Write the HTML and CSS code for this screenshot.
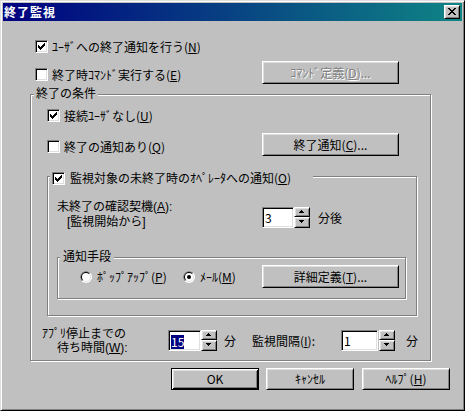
FILE: index.html
```html
<!DOCTYPE html>
<html lang="ja">
<head>
<meta charset="utf-8">
<title>終了監視</title>
<link rel="stylesheet" href="styles.css">
</head>
<body>
<div class="window">
  <div class="titlebar">
    <span class="title">終了監視</span>
    <span class="close raised"><svg width="8" height="7" viewBox="0 0 8 7"><path d="M0 0h2v1h-2zM6 0h2v1h-2zM1 1h2v1h-2zM5 1h2v1h-2zM2 2h4v1h-4zM3 3h2v1h-2zM2 4h4v1h-4zM1 5h2v1h-2zM5 5h2v1h-2zM0 6h2v1h-2zM6 6h2v1h-2z"/></svg></span>
  </div>
  <div class="client">
    <div class="row r1">
      <span class="check"><svg width="7" height="7" viewBox="0 0 7 7"><path d="M6 0h1v1h-1zM5 1h2v1h-2zM0 2h1v1h-1zM4 2h3v1h-3zM0 3h2v1h-2zM3 3h3v1h-3zM0 4h5v1h-5zM1 5h3v1h-3zM2 6h1v1h-1z"/></svg></span><span class="lbl">ﾕｰｻﾞへの終了通知を行う(<u>N</u>)</span>
    </div>
    <div class="row r2">
      <div class="left"><span class="check"></span><span class="lbl">終了時ｺﾏﾝﾄﾞ実行する(<u>E</u>)</span></div>
      <button class="btn raised disabled">ｺﾏﾝﾄﾞ定義(<u>D</u>)...</button>
    </div>
    <div class="group g1">
      <div class="legend">終了の条件</div>
      <div class="row r3">
        <span class="check"><svg width="7" height="7" viewBox="0 0 7 7"><path d="M6 0h1v1h-1zM5 1h2v1h-2zM0 2h1v1h-1zM4 2h3v1h-3zM0 3h2v1h-2zM3 3h3v1h-3zM0 4h5v1h-5zM1 5h3v1h-3zM2 6h1v1h-1z"/></svg></span><span class="lbl">接続ﾕｰｻﾞなし(<u>U</u>)</span>
      </div>
      <div class="row r4">
        <div class="left"><span class="check"></span><span class="lbl">終了の通知あり(<u>Q</u>)</span></div>
        <button class="btn raised">終了通知(<u>C</u>)...</button>
      </div>
      <div class="group g2">
        <div class="legend"><span class="check"><svg width="7" height="7" viewBox="0 0 7 7"><path d="M6 0h1v1h-1zM5 1h2v1h-2zM0 2h1v1h-1zM4 2h3v1h-3zM0 3h2v1h-2zM3 3h3v1h-3zM0 4h5v1h-5zM1 5h3v1h-3zM2 6h1v1h-1z"/></svg></span><span class="lbl">監視対象の未終了時のｵﾍﾟﾚｰﾀへの通知(<u>O</u>)</span></div>
        <div class="row r5">
          <div class="desc">
            <div>未終了の確認契機(<u>A</u>):</div>
            <div class="l2">[監視開始から]</div>
          </div>
          <div class="spinrow">
            <span class="edit e32">3</span>
            <span class="updown">
              <span class="ud up raised"><svg width="5" height="3" viewBox="0 0 5 3"><path d="M2 0h1v1h-1zM1 1h3v1h-3zM0 2h5v1h-5z"/></svg></span>
              <span class="ud dn raised"><svg width="5" height="3" viewBox="0 0 5 3"><path d="M0 0h5v1h-5zM1 1h3v1h-3zM2 2h1v1h-1z"/></svg></span>
            </span>
            <span class="unit">分後</span>
          </div>
        </div>
        <div class="group g3">
          <div class="legend">通知手段</div>
          <div class="row r6">
            <div class="ritem ri1">
              <svg class="radio" width="12" height="12" viewBox="0 0 12 12"><circle cx="6" cy="6" r="6" fill="#fff"/><path d="M1.757 10.243A6 6 0 0 1 10.243 1.757Z" fill="#808080"/><circle cx="6" cy="6" r="5" fill="#dfdfdf"/><path d="M2.464 9.536A5 5 0 0 1 9.536 2.464Z" fill="#000"/><circle cx="6" cy="6" r="4" fill="#fff"/></svg>
              <span class="rlbl">ﾎﾟｯﾌﾟｱｯﾌﾟ(<u>P</u>)</span>
            </div>
            <div class="ritem ri2">
              <svg class="radio" width="12" height="12" viewBox="0 0 12 12"><circle cx="6" cy="6" r="6" fill="#fff"/><path d="M1.757 10.243A6 6 0 0 1 10.243 1.757Z" fill="#808080"/><circle cx="6" cy="6" r="5" fill="#dfdfdf"/><path d="M2.464 9.536A5 5 0 0 1 9.536 2.464Z" fill="#000"/><circle cx="6" cy="6" r="4" fill="#fff"/><circle cx="6" cy="6" r="2" fill="#000"/></svg>
              <span class="rlbl">ﾒｰﾙ(<u>M</u>)</span>
            </div>
            <button class="btn raised">詳細定義(<u>T</u>)...</button>
          </div>
        </div>
      </div>
      <div class="row r7">
        <div class="desc2">
          <div>ｱﾌﾟﾘ停止までの</div>
          <div class="l2">待ち時間(<u>W</u>):</div>
        </div>
        <div class="spinrow">
          <span class="edit e33"><span class="sel">15</span></span>
          <span class="updown">
            <span class="ud up raised"><svg width="5" height="3" viewBox="0 0 5 3"><path d="M2 0h1v1h-1zM1 1h3v1h-3zM0 2h5v1h-5z"/></svg></span>
            <span class="ud dn raised"><svg width="5" height="3" viewBox="0 0 5 3"><path d="M0 0h5v1h-5zM1 1h3v1h-3zM2 2h1v1h-1z"/></svg></span>
          </span>
          <span class="unit u1">分</span>
          <span class="ilbl">監視間隔(<u>I</u>):</span>
          <span class="edit e37">1</span>
          <span class="updown gap1">
            <span class="ud up raised"><svg width="5" height="3" viewBox="0 0 5 3"><path d="M2 0h1v1h-1zM1 1h3v1h-3zM0 2h5v1h-5z"/></svg></span>
            <span class="ud dn raised"><svg width="5" height="3" viewBox="0 0 5 3"><path d="M0 0h5v1h-5zM1 1h3v1h-3zM2 2h1v1h-1z"/></svg></span>
          </span>
          <span class="unit u2">分</span>
        </div>
      </div>
    </div>
    <div class="buttons">
      <button class="btn pb default">OK</button>
      <button class="btn pb raised cancel">ｷｬﾝｾﾙ</button>
      <button class="btn pb raised help">ﾍﾙﾌﾟ(<u>H</u>)</button>
    </div>
  </div>
</div>
</body>
</html>
```

FILE: styles.css
```css
* { box-sizing: border-box; }
html, body { margin: 0; padding: 0; }
body {
  width: 465px;
  height: 411px;
  overflow: hidden;
  background: #c0c0c0;
  font-family: "Noto Sans CJK JP", "Noto Sans", sans-serif;
  font-size: 12px;
  line-height: 14px;
  color: #000;
}
u { text-decoration: underline; text-underline-offset: 1px; }
svg { display: block; }

.window {
  width: 465px;
  height: 411px;
  border: 1px solid;
  border-color: #dfdfdf #000 #000 #dfdfdf;
  box-shadow: inset 1px 1px 0 #fff, inset -1px -1px 0 #808080;
  padding: 2px;
  background: #c0c0c0;
}
.titlebar {
  height: 18px;
  display: flex;
  align-items: center;
  justify-content: space-between;
  padding: 0 2px 0 1px;
  background: linear-gradient(to right, #000080, #0f8585);
}
.title {
  color: #fff;
  font-weight: bold;
  font-size: 12px;
  line-height: 18px;
  letter-spacing: 1px;
}
.close { display: block; width: 16px; height: 14px; }
.close svg { margin: 2px 0 0 3px; }

.raised {
  background: #c0c0c0;
  border: 1px solid;
  border-color: #fff #000 #000 #fff;
  box-shadow: inset 1px 1px 0 #dfdfdf, inset -1px -1px 0 #808080;
}

.row { display: flex; }
.check {
  display: block;
  width: 13px;
  height: 13px;
  flex: none;
  border: 1px solid;
  border-color: #808080 #fff #fff #808080;
  box-shadow: inset 1px 1px 0 #000, inset -1px -1px 0 #dfdfdf;
  background: #fff;
}
.check svg { margin: 2px 0 0 2px; }
.lbl { margin-left: 4px; white-space: nowrap; }

.btn {
  appearance: none;
  margin: 0;
  padding: 0;
  font-family: inherit;
  font-size: 12px;
  line-height: 14px;
  color: #000;
  width: 137px;
  height: 23px;
  flex: none;
  display: flex;
  align-items: center;
  justify-content: center;
  white-space: nowrap;
}
.btn.disabled { color: #808080; text-shadow: 1px 1px 0 #fff; }

.r1 { margin: 19px 0 0 32px; height: 13px; align-items: center; }
.r2 { margin: 8px 0 0 32px; height: 23px; }
.r2 .left { width: 227px; height: 13px; margin-top: 7px; display: flex; align-items: center; }

.group {
  border: 1px solid #808080;
  box-shadow: 1px 1px 0 #fff, inset 1px 1px 0 #fff;
}
.legend {
  background: #c0c0c0;
  height: 14px;
  line-height: 14px;
  width: fit-content;
  white-space: nowrap;
}
.g1 { margin: 10px 0 0 27px; width: 401px; height: 267px; }
.g1 > .legend { margin: -9px 0 0 3px; padding: 0 2px; }

.r3 { margin: 9px 0 0 16px; height: 13px; align-items: center; }
.r4 { margin: 11px 0 0 16px; height: 23px; }
.r4 .left { width: 215px; height: 13px; margin-top: 7px; display: flex; align-items: center; }

.g2 { margin: 20px 0 0 16px; width: 370px; height: 140px; }
.g2 > .legend {
  margin: -6px 0 0 2px;
  padding: 0 2px;
  width: 263px;
  display: flex;
  align-items: center;
}
.g2 > .legend .lbl { margin-left: 5px; }

/* two-line captions: compact line boxes */
.desc, .desc2 {
  font-family: "Liberation Sans", "Noto Sans CJK JP", sans-serif;
  white-space: nowrap;
  padding-top: 1px;
}

.r5 { margin: 14px 0 0 9px; }
.desc { width: 205px; line-height: 15px; }
.desc .l2 { padding-left: 10px; }
.r5 .spinrow { margin-top: 8px; }

.spinrow { display: flex; align-items: center; height: 21px; }
.edit {
  display: block;
  height: 21px;
  border: 1px solid;
  border-color: #808080 #fff #fff #808080;
  box-shadow: inset 1px 1px 0 #000, inset -1px -1px 0 #dfdfdf;
  background: #fff;
  padding: 0 0 0 2px;
  line-height: 19px;
  flex: none;
}
.e32 { width: 32px; }
.e33 { width: 33px; }
.e37 { width: 37px; }
.sel {
  display: inline-block;
  background: #000080;
  color: #fff;
  height: 14px;
  line-height: 14px;
  vertical-align: middle;
  margin-top: -2px;
}
.updown { display: flex; flex-direction: column; width: 16px; height: 21px; flex: none; }
.updown.gap1 { margin-left: 1px; }
.ud { display: block; }
.ud.up { height: 10px; }
.ud.dn { height: 11px; }
.ud svg { margin: 2px 0 0 4px; }
.unit { margin-left: 8px; white-space: nowrap; }
.unit.u1 { margin-left: 7px; }
.ilbl { margin-left: 16px; width: 89px; white-space: nowrap; }
.unit.u2 { margin-left: 11px; }

.g3 { margin: 27px 0 0 9px; width: 349px; height: 42px; }
.g3 > .legend { margin: -9px 0 0 2px; padding: 0 3px; }
.r6 { margin: 2px 0 0 22px; height: 23px; align-items: center; }
.ritem { display: flex; align-items: center; }
.ri1 { width: 103px; }
.ri2 { width: 79px; }
.rlbl { margin-left: 5px; white-space: nowrap; }

.r7 { margin: 10px 0 0 11px; }
.desc2 { width: 126px; line-height: 14px; }
.desc2 .l2 { padding-left: 15px; }
.r7 .spinrow { margin-top: 4px; }

.buttons { display: flex; margin: 7px 0 0 168px; }
.pb { width: 88px; height: 22px; }
.default {
  background: #c0c0c0;
  border: 1px solid #000;
  box-shadow: inset 1px 1px 0 #fff, inset -1px -1px 0 #000, inset 2px 2px 0 #dfdfdf, inset -2px -2px 0 #808080;
}
.cancel { margin-left: 7px; }
.help { margin-left: 8px; }
```
